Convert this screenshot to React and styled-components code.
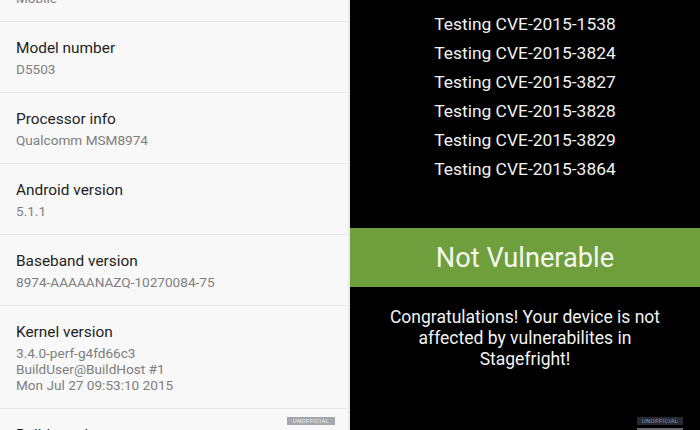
import React from 'react'
import styled, { createGlobalStyle } from 'styled-components'

const GlobalStyle = createGlobalStyle`
    html, body {
        margin: 0;
        padding: 0;
        background: #000;
    }
    body {
        font-family: Roboto, 'Liberation Sans', sans-serif;
        -webkit-font-smoothing: antialiased;
    }
`

const about = [
    { title: 'Device type', value: ['Mobile'] },
    { title: 'Model number', value: ['D5503'] },
    { title: 'Processor info', value: ['Qualcomm MSM8974'] },
    { title: 'Android version', value: ['5.1.1'] },
    { title: 'Baseband version', value: ['8974-AAAAANAZQ-10270084-75'] },
    {
        title: 'Kernel version',
        value: [
            '3.4.0-perf-g4fd66c3',
            'BuildUser@BuildHost #1',
            'Mon Jul 27 09:53:10 2015',
        ],
    },
    { title: 'Build number', value: ['23.4.A.1.232'] },
]

const cves = ['1538', '3824', '3827', '3828', '3829', '3864']

const App = () => {
    return (
        <>
            <GlobalStyle />
            <Screen>
                <Settings>
                    <List>
                        {about.map((item) => (
                            <Row key={item.title}>
                                <Title>{item.title}</Title>
                                {item.value.map((line) => (
                                    <Value key={line}>{line}</Value>
                                ))}
                            </Row>
                        ))}
                    </List>
                    <Badge $dark={false}>UNOFFICIAL</Badge>
                </Settings>
                <Checker>
                    <Tests>
                        {cves.map((id) => (
                            <Test key={id}>Testing CVE-2015-{id}</Test>
                        ))}
                    </Tests>
                    <Result>Not Vulnerable</Result>
                    <Message>
                        Congratulations! Your device is not
                        <br />
                        affected by vulnerabilites in
                        <br />
                        Stagefright!
                    </Message>
                    <Badge $dark>UNOFFICIAL</Badge>
                    <BadgeTail />
                </Checker>
            </Screen>
        </>
    )
}

const Screen = styled.div`
    display: grid;
    grid-template-columns: 350px 350px;
    width: 700px;
    height: 430px;
    overflow: hidden;
`

const Settings = styled.div`
    position: relative;
    background: #f8f8f8;
    border-right: 2px solid #e9e9e9;
    overflow: hidden;
`

const List = styled.div`
    display: flex;
    flex-direction: column;
    margin-top: -49px;
    margin-right: 1px;
`

const Row = styled.div`
    display: flex;
    flex-direction: column;
    padding: 16px 16px 15px;
    border-bottom: 1px solid #e6e6e6;
`

const Title = styled.div`
    font-size: 15.4px;
    line-height: 20px;
    color: #232323;
    margin-bottom: 3px;
`

const Value = styled.div`
    font-size: 13.6px;
    line-height: 16px;
    color: #7e7e7e;
`

const Badge = styled.div`
    position: absolute;
    right: ${(p) => (p.$dark ? '17px' : '13px')};
    top: 417px;
    width: ${(p) => (p.$dark ? '46px' : '48px')};
    height: 8px;
    background: ${(p) => (p.$dark ? '#262b33' : '#a3a7ae')};
    color: ${(p) => (p.$dark ? '#8e96a3' : '#eef0f2')};
    font-size: 6px;
    line-height: 8px;
    text-align: center;
    letter-spacing: 0.3px;
`

const BadgeTail = styled.div`
    position: absolute;
    right: 17px;
    top: 428px;
    width: 46px;
    height: 4px;
    background: #6a6d72;
`

const Checker = styled.div`
    position: relative;
    background: #000;
    display: flex;
    flex-direction: column;
    align-items: stretch;
    color: #f2f2f2;
`

const Tests = styled.div`
    display: flex;
    flex-direction: column;
    align-items: center;
    padding-top: 10px;
`

const Test = styled.div`
    font-size: 17.4px;
    line-height: 29px;
`

const Result = styled.div`
    margin-top: 44px;
    height: 59px;
    background: #6f9f3c;
    display: flex;
    align-items: center;
    justify-content: center;
    font-size: 27.2px;
    color: #f4f7ef;
`

const Message = styled.div`
    margin-top: 20px;
    text-align: center;
    font-size: 17.5px;
    line-height: 21px;
`

export default App
